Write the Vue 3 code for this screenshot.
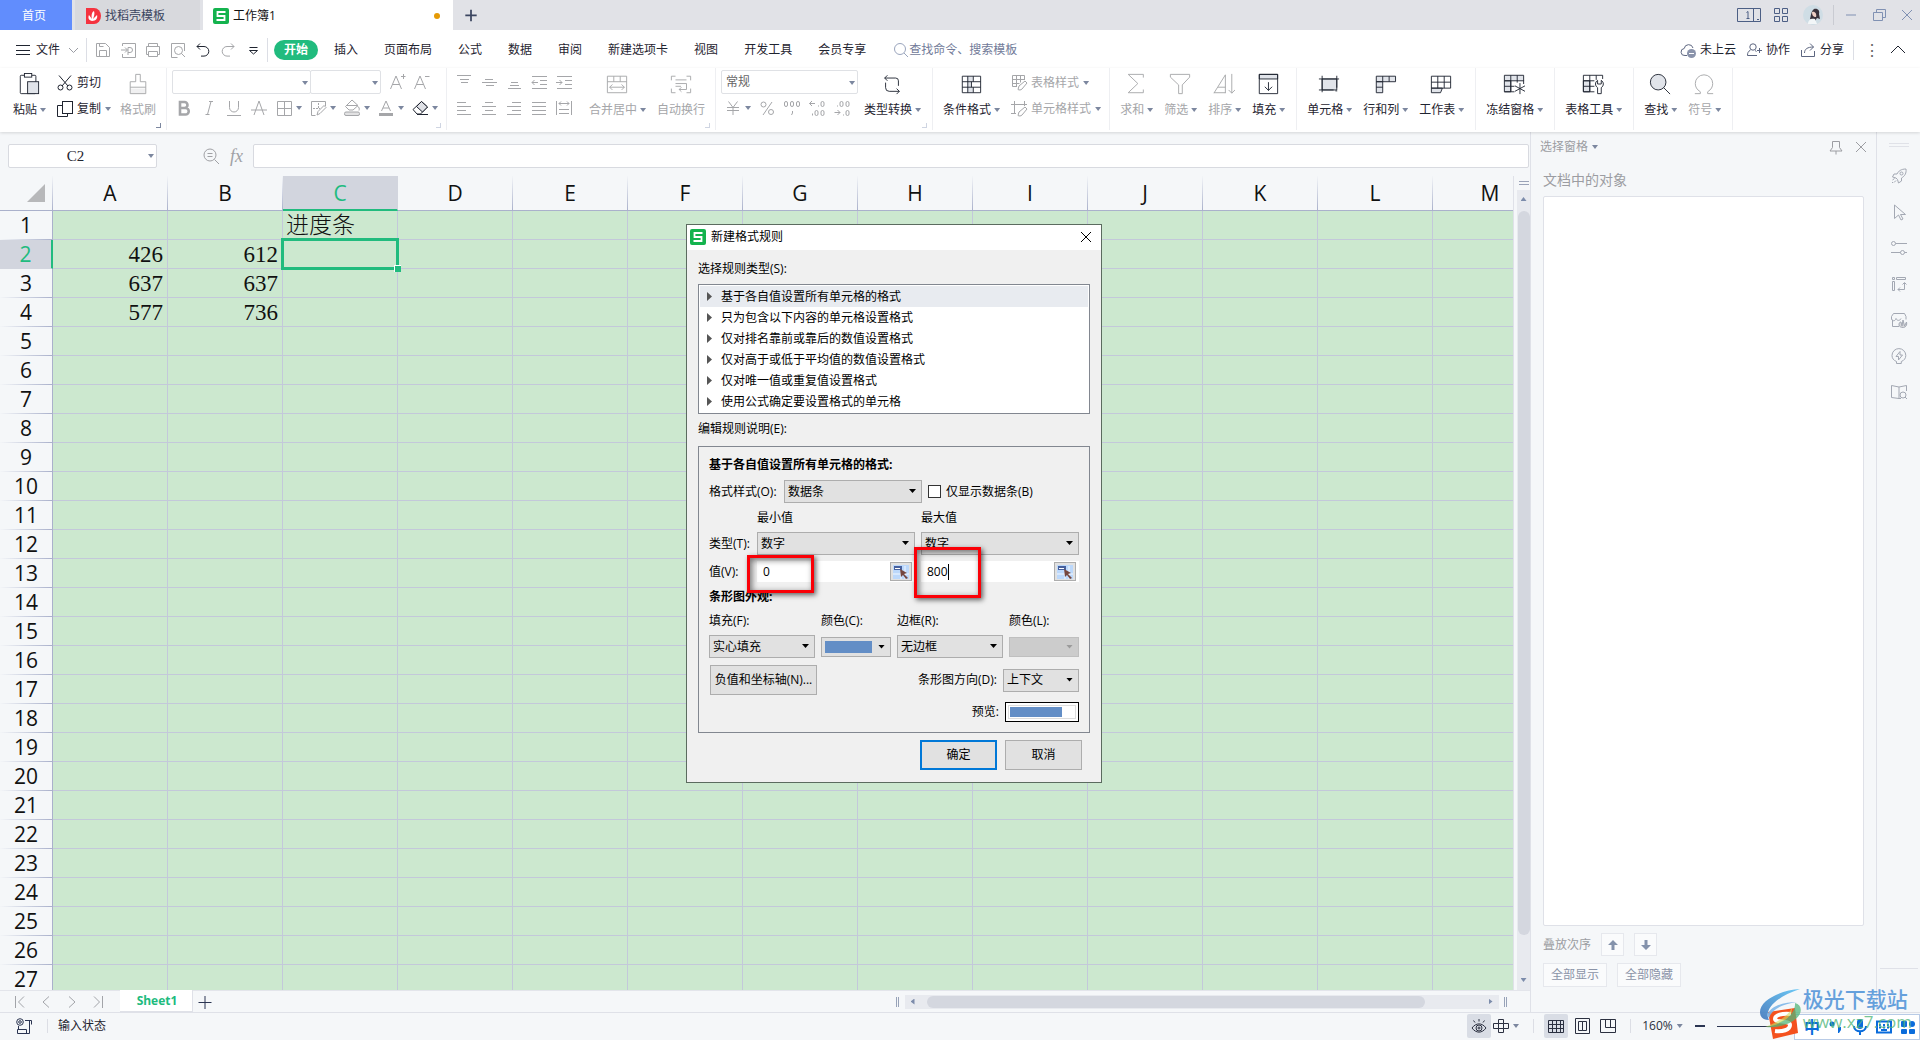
<script setup>
import { ref } from 'vue'

const icons = {
  menu: '<path d="M1 3.500h14M1 8.500h14M1 12.500h14"/>',
  chevDown: '<path d="M4 6l4.500 4.500L13 6"/>',
  save: '<path d="M1.500 1.500h9l4 4v9h-13zM4.500 14.500v-6h7v6M4.500 1.500v3h4"/>',
  exportPdf: '<path d="M2.500 4V1.500h13v14h-13V12M1 8h6M5 5.500L7.500 8 5 10.500M8 13V5.500h2a2 2 0 0 1 0 5H8"/>',
  print: '<path d="M3.500 4.500v-3h9v3M3.500 12.500h-2v-8h13v8h-2M3.500 9.500h9v5h-9z"/>',
  preview: '<path d="M14.500 9V1.500h-13v14h6"/><circle cx="8.500" cy="8.500" r="4"/><path d="M11.500 11.500l3.500 3.500"/>',
  undo: '<path d="M5 1.500L2 4.500l3 3M2 4.500h7a4.800 4.800 0 0 1 0 9.600H6"/>',
  redo: '<path d="M11 1.500l3 3-3 3M14 4.500H7a4.800 4.800 0 0 0 0 9.600h3"/>',
  more: '<path d="M4.500 5.500h8M4.500 8.500l4 3.500 4-3.500z"/>',
  search: '<circle cx="7" cy="7" r="5.500"/><path d="M11 11l4 4"/>',
  cloud: '<path d="M7 13.500H5a3.500 3.500 0 0 1-.8-7 4.500 4.500 0 0 1 8.800-.5"/><circle cx="11.500" cy="11.500" r="4.500" fill="#8a93ab" stroke="none"/><path d="M9 11.500h5" stroke="#fff"/>',
  person: '<circle cx="7" cy="5" r="3.200"/><path d="M4.500 8C2 9.500 1.500 11 1.500 13.500h9.500M9 8.500l1.500 1M11 8.500h5M13.500 6v5"/>',
  share: '<path d="M1.500 8v6.500h13V9M4.500 11c0-4 3-6 9-6M10 1.500L13.500 5 10 8.500"/>',
  chevUp: '<path d="M1 11l7-7 7 7"/>',
  paste: '<rect x="2.500" y="2.500" width="17" height="20" rx="1" fill="#fff"/><rect x="7" y=".5" width="8" height="4" fill="#fff"/><rect x="10.500" y="9.500" width="12" height="13" fill="#e1e4ea"/>',
  cut: '<circle cx="3.500" cy="12.500" r="2.500"/><circle cx="12.500" cy="12.500" r="2.500"/><path d="M2 .5L11 11M14 .5L5 11"/>',
  copy: '<path d="M5 4.500H.5v11h10v-3"/><rect x="5.500" y=".5" width="10" height="12" fill="#fff"/>',
  painter: '<rect x="3.500" y="17" width="17" height="5.500" fill="#f0f0f1" stroke="none"/><path d="M9.500 1.500h5v8h6v13h-17v-13h6zM3.500 15.500h17"/>',
  bold: '<path d="M4 2h4.500a3 3 0 0 1 0 6H4zM4 8h5.500a3.200 3.200 0 0 1 0 6.500H4z" stroke-width="2.600"/>',
  italic: '<path d="M8 1.500h4M10 1.500L6.500 14.500M4.500 14.500h4"/>',
  underline: '<path d="M3.500 1v6.500a4.500 4.500 0 0 0 9 0V1M1 15.500h14"/>',
  strike: '<path d="M3 15L8 1l5 14M0 10h16"/>',
  border: '<path d="M1.500 1.500h14v14h-14zM8.500 1.500v14M1.500 8.500h14"/>',
  borderPen: '<path d="M15.500 6V1.500h-14v14h4"/><path d="M8.500 3v6M3 8.500h7" stroke-dasharray="2 1"/><path d="M7 15l1-3.500 6-6 2 2-6 6z"/>',
  bucket: '<path d="M8 0l6 5.500-5 4.500h-4L1.500 6.500zM3 5.500h10M13 5.500c2.500 2 2.500 3 2 5"/><rect x=".5" y="12" width="15" height="3.500" rx="1.500" fill="#e2e2e3"/>',
  fontColor: '<path d="M3.500 11L8 1l4.500 10M5 8h6"/><path d="M1 14.500h14" stroke-width="3"/>',
  eraser: '<path d="M9.500 1.500l6 5.500-7 7H5L1 9.500z"/><path d="M9.500 1.500l6 5.500-5 5L4.500 6.500z" fill="#dfe1e6"/><path d="M5 14.500h11"/>',
  aPlus: '<path d="M1.500 15L7 2l5.500 13M3.500 10.500h7M12 2.500h4.500M14.500 0v5"/>',
  aMinus: '<path d="M1.500 15L7 2l5.500 13M3.500 10.500h7M12 2.500h4.500"/>',
  alTop: '<path d="M1 1.500h14M4 5.500h9M5 8.500h7"/>',
  alMid: '<path d="M4 5.500h8M1 8.500h15M5 11.500h8"/>',
  alBot: '<path d="M5 8.500h7M4 11.500h9M2 14.500h13"/>',
  outdent: '<path d="M1 2.500h15M9 6.500h7M9 10.500h7M1 14.500h15M1 8.500h6M3.500 6L1 8.500 3.500 11"/>',
  indent: '<path d="M1 2.500h15M9 6.500h7M9 10.500h7M1 14.500h15M0 8.500h6M3.500 6L6 8.500 3.500 11"/>',
  alLeft: '<path d="M1 2.500h9M1 6.500h14M1 10.500h9M1 14.500h14"/>',
  alCenter: '<path d="M4 2.500h8M1 6.500h14M4 10.500h8M1 14.500h14"/>',
  alRight: '<path d="M6 2.500h9M1 6.500h14M6 10.500h9M1 14.500h14"/>',
  justify: '<path d="M1 2.500h14M1 6.500h14M1 10.500h14M1 14.500h14"/>',
  distribute: '<path d="M.5 1v14M15.500 1v14M3 3.500h10M5 1.500L3 3.500l2 2M11 1.500l2 2-2 2M3 9.500h10M3 13.500h10"/>',
  merge: '<path d="M1.500 3.500h21v18h-21zM1.500 9.500h21M8.500 3.500v6M15.500 3.500v6M4 15.500h16M7 12.500l-3 3 3 3M17 12.500l3 3-3 3"/>',
  wrap: '<path d="M1.500 8V3.500H6M18 3.500h4.500V8M1.500 17v4.500H6M18 21.500h4.500V17M6 7.500h12M6 11.500h12v6.500h-8M12.500 15.500L10 18l2.500 2.500M6 14.500h6"/>',
  yen: '<path d="M3.500 1.500L8 7.500l4.500-6M2 7.500h12M2 10.500h12M8 7.500V15"/>',
  percent: '<circle cx="4.500" cy="4.500" r="2.500"/><circle cx="12" cy="12" r="2.500"/><path d="M13 2L4 15"/>',
  thousand: '<rect x=".5" y="1.500" width="3" height="5" rx="1.500"/><rect x="6.500" y="1.500" width="3" height="5" rx="1.500"/><rect x="12.500" y="1.500" width="3" height="5" rx="1.500"/><path d="M8.500 11v2l-1 2"/>',
  decInc: '<path d="M.5 3.500H6M3 1L.5 3.500 3 6M3.500 13.500v2M9.500 5.500v1"/><rect x="12" y="1.500" width="3" height="5" rx="1.500"/><rect x="6" y="10.500" width="3" height="5" rx="1.500"/><rect x="12" y="10.500" width="3" height="5" rx="1.500"/>',
  decDec: '<rect x="6" y="1.500" width="3" height="5" rx="1.500"/><rect x="12" y="1.500" width="3" height="5" rx="1.500"/><path d="M3.500 5.500v1M.5 12.500H6M3.500 10L6 12.500 3.500 15M9.500 14.500v1"/><rect x="12" y="10.500" width="3" height="5" rx="1.500"/>',
  convert: '<path d="M7 2.500L4 5.500l3 3M4 5.500h12a3 3 0 0 1 3 3V14M5 10.500V16a4 4 0 0 0 4 4h11M17 17l3 3-3 3"/>',
  condFmt: '<path d="M7.500 3.500h7v6h-7zM8.500 9.500h4v6h-4zM7.500 15.500h7v6h-7z" fill="#e1e4ea" stroke="none"/><path d="M2.500 3.500h20v18h-20zM2.500 9.500h20M2.500 15.500h20M8.500 3.500v18M14.500 3.500v6M12.500 9.500v6M14.500 15.500v6"/>',
  tblStyle: '<path d="M6 11.500H1.500v-11h12V5M1.500 4.500h12M1.500 8.500h7M5.500.5v11M9.500.5v7"/><path d="M7 14.500l1-3.500 6-5 2 2-5 6c-1 1.200-3 1.200-4 .5z"/>',
  cellStyle: '<path d="M3.500 0v13M0 3.500h16M13.500 0v5M0 12.500h5"/><path d="M7 14.500l1-3.500 6-5 2 2-5 6c-1 1.200-3 1.200-4 .5z"/>',
  sum: '<path d="M20 5V1.500H3.500L14 11.500 3.500 21.500H20V18"/>',
  filter: '<path d="M1.500 1.500h21v3L14.500 13v9.500h-4V13l-9-8.500z"/>',
  sort: '<path d="M1 22L13.500 2v20M5.500 15.500h8M1 21.500h12.500M20.500 1v21M17 18.500l3.500 3.500 3.500-3.500"/>',
  fill: '<path d="M2.500 1.500h20v5h-20z" fill="#e1e4ea"/><path d="M2.500 1.500h20v21h-20zM12.500 10v9M8.500 15l4 4 4-4"/>',
  cells: '<path d="M4.500 6.500h16v12h-16z" fill="#e1e4ea"/><path d="M4.500 3v18M20.500 3v13M1 6.500h22M1 18.500h16M19 19.500h2"/>',
  rowCol: '<path d="M2.500 3.500h21v6h-21zM2.500 9.500h7v12h-7z" fill="#e1e4ea"/><path d="M9.500 3.500v6M16.500 3.500v6M2.500 15.500h7"/>',
  sheet: '<path d="M1.500 16.500v5h10l2-5z" fill="#e1e4ea"/><path d="M1.500 3.500h21v13h-21zM1.500 10h21M8.500 3.500v13M15.500 3.500v13"/>',
  freeze: '<path d="M1.500 2.500h21v6h-21zM1.500 8.500h7v12h-7z" fill="#e1e4ea"/><path d="M8.500 2.500v18M15.500 2.500v8M1.500 14.500h11M22.500 8v4M1.500 20.500h11"/><path d="M18.500 11v12M13 14l11 6M24 14l-11 6"/>',
  tools: '<path d="M1.500 8.500h7v12h-7z" fill="#e1e4ea"/><path d="M1.500 2.500h21v4M1.500 2.500v18h12M8.500 2.500v18M15.500 2.500v5M1.500 8.500h12M1.500 14.500h12"/><path d="M17 8v4h4V8c3 2 3 6 0 8v6.500h-4V16c-3-2-3-6 0-8z" fill="#fff"/>',
  find: '<circle cx="10" cy="10" r="8.500" fill="#e1e4ea"/><path d="M16 16l7 7"/>',
  omega: '<path d="M2 22.500h6v-2C4 18 2.500 15 2.500 11.500a9.500 9.500 0 0 1 19 0C21.500 15 20 18 16 20.500v2h6"/>',
  zoomOut: '<circle cx="7" cy="7" r="6"/><path d="M4.500 5.500h5M4.500 8.500h5M11.500 11.500L16 16"/>',
  pin: '<path d="M4.500 2.500h7v6l2.500 3.500H2l2.500-3.500zM8 12v3.500"/>',
  close: '<path d="M3 3l10 10M13 3L3 13"/>',
  plus: '<path d="M8 2v13M1.500 8.500h13"/>',
  minus: '<path d="M3 8h10"/>',
  restore: '<path d="M5.500 5V2.500h9v8H12M2.500 5.500h9v8h-9z"/>',
  apps: '<path d="M1.500 1.500h5v5h-5zM9.500 1.500h5v5h-5zM1.500 9.500h5v5h-5zM9.500 9.500h5v5h-5z"/>',
  rocket: '<path d="M15 1c-5 0-7.500 2-9 5H3L1.500 9 5 10l1.500 1.500 1 3.500 3-2v-3C14 8 15.500 5 15 1zM1.500 12l2-1.500M3 14.500l2-2M1 15l1-1"/><circle cx="10.500" cy="5.500" r="1.500"/>',
  cursor: '<path d="M3.500 1v13.500l4-3.500 2.500 5 2-1-2.500-4.500h5z"/>',
  sliders: '<circle cx="2.500" cy="3.500" r="2"/><circle cx="11.500" cy="12.500" r="2"/><path d="M4.500 3.500H16M0 12.500h9.500M13.500 12.500H16"/>',
  transpose: '<path d="M1.500 1.500h2v2h-2zM5.500 1.500h9v2h-9zM1.500 5.500h2v9h-2zM7 13.500h6.500V7M9 11.500l-2 2 2 2M11.500 8.500l2-2 2 2"/>',
  shop: '<path d="M8 14.500H1.500V8M.5 7.500v-3l2-3h11l1.500 3v3M.5 6.500c1 3 3.500 3 4.500 0 1 2.500 4 2.500 5 0"/><path d="M8 13c0-2 .5-3 2-3l1 4 1-6 1.500 6 2-4c.8 3-.5 5-3 5.500-2.500 0-4.500-1-4.500-2.500z" fill="#d8d9dc"/>',
  bulb: '<path d="M5.500 15.500v-2C2.500 12.500 1 10 1 7.500a6.800 6.800 0 0 1 13.800 0c0 2.500-1.500 5-4.500 6v2zM9 3.500L5 8.500h2.500V12l4-5H9z"/>',
  book: '<path d="M8 14.500L.5 13.500v-12L8 3l7.500-1.500V7M8 3v11.500h2"/><circle cx="12" cy="11" r="3"/><path d="M14 13l2 2"/>',
  first: '<path d="M3.500 2v12M12 2.500L6.500 8l5.500 5.500"/>',
  prev: '<path d="M11 2.500L5 8l6 5.500"/>',
  next: '<path d="M5 2.500L11 8l-6 5.500"/>',
  last: '<path d="M4 2.500L9.500 8 4 13.500M12.500 2v12"/>',
  macro: '<circle cx="4" cy="4" r="3.300"/><circle cx="4" cy="4" r="1.300"/><path d="M9 2.500h6.500v4M13.500 2.500v13h-12v-4h9v4M2.500 11.500V8"/>',
  eye: '<path d="M1 10c4-5.500 10-5.500 14 0-4 5.500-10 5.500-14 0z"/><circle cx="8" cy="10" r="3"/><circle cx="8" cy="10" r="1"/><path d="M8 1v2.500M2.500 2.500L4 4.500M13.500 2.500L12 4.500"/>',
  cross: '<path d="M5.500 1.500h5v4h5v5h-5v4h-5v-4h-5v-5h5zM5.500 5.500h5v5h-5z"/>',
  gridView: '<path d="M.5 2.500h15v12H.5zM.5 6.500h15M.5 10.500h15M4.500 2.500v12M8.500 2.500v12M12.500 2.500v12"/>',
  pageView: '<path d="M1.500.5h14v15h-14zM4.500 3.500h4v9h-4zM8.500 3.500h4v9h-4z"/>',
  breakView: '<path d="M.5 1.500h15v13H.5zM5.500 1.500v8h10M10.500 1.500v8"/>'
}

const menus = ['插入', '页面布局', '公式', '数据', '审阅', '新建选项卡', '视图', '开发工具', '会员专享']
const quick = [
  ['save', 1, '保存'], ['exportPdf', 1, '输出'], ['print', 1, '打印'], ['preview', 1, '预览'],
  ['undo', 0, '撤销'], ['redo', 1, '恢复'], ['more', 0, '更多']
]
const fontTools = [
  ['bold', 0], ['italic', 0], ['underline', 0], ['strike', 0],
  ['border', 1], ['borderPen', 1], ['bucket', 1], ['fontColor', 1]
]
const alignTop = ['alTop', 'alMid', 'alBot', 'outdent', 'indent']
const alignBottom = ['alLeft', 'alCenter', 'alRight', 'justify', 'distribute']
const editGroups = [
  [['sum', '求和', 1], ['filter', '筛选', 1], ['sort', '排序', 1], ['fill', '填充', 0]],
  [['cells', '单元格', 0], ['rowCol', '行和列', 0], ['sheet', '工作表', 0]],
  [['freeze', '冻结窗格', 0]],
  [['tools', '表格工具', 0]],
  [['find', '查找', 0], ['omega', '符号', 1]]
]
const columns = 'ABCDEFGHIJKLM'.split('')
const cells = { A2: '426', B2: '612', A3: '637', B3: '637', A4: '577', B4: '736', C1: '进度条' }
const rules = [
  '基于各自值设置所有单元格的格式', '只为包含以下内容的单元格设置格式', '仅对排名靠前或靠后的数值设置格式',
  '仅对高于或低于平均值的数值设置格式', '仅对唯一值或重复值设置格式', '使用公式确定要设置格式的单元格'
]
const sideIcons = ['rocket', 'cursor', 'sliders', 'transpose', 'shop', 'bulb', 'book']
const minValue = ref('0')
const maxValue = ref('800')
const formula = ref('')
</script>

<template>
  <div class="app">
    <header class="titlebar">
      <button class="tab home">首页</button>
      <button class="tab template">
        <svg class="logo" viewBox="0 0 16 16"><path d="M1 0h8a7 8 0 0 1 0 16H1z" fill="#f5333f" /><path d="M7 13C3 12 3 9 4 7l3 4c-1-4 0-7 2-8 1 3 0 5-1 8l4-4c1 3-1 6-5 6z" fill="#fff" /></svg>
        找稻壳模板
      </button>
      <button class="tab book">
        <svg class="logo" viewBox="0 0 16 16"><rect width="16" height="16" rx="2" fill="#14b34e" /><path d="M12.500 4h-8v4h7v4h-8" fill="none" stroke="#fff" stroke-width="1.800" /></svg>
        工作簿1<i class="dot"></i>
      </button>
      <button class="newtab" aria-label="新建"><svg class="i16" viewBox="0 0 16 16" v-html="icons.plus"></svg></button>
      <div class="window-tools">
        <svg class="count" viewBox="0 0 24 14"><path d="M.5.500h23v13H.5zM16.500.500v13M20 11.500h2" /><path d="M9.500 4.500L11 3.500v7M9.500 10.500h3" /></svg>
        <svg class="i16" viewBox="0 0 16 16" v-html="icons.apps"></svg>
        <svg class="avatar" viewBox="0 0 20 20"><circle cx="10" cy="10" r="10" fill="#cfdde5" /><path d="M7 14c1-3 1-8 4-10 4-1 6 2 5 5l1 5-3-1-2 3z" fill="#3a323b" /><path d="M9 7c3-1 5 2 4 5-3 0-4-2-4-5z" fill="#f0cfc4" /><path d="M5 19c0-4 3-6 7-5l2 5z" fill="#f2f6f8" /></svg>
        <i class="bar"></i>
        <button aria-label="最小化"><svg class="i16" viewBox="0 0 16 16" v-html="icons.minus"></svg></button>
        <button aria-label="还原"><svg class="i16" viewBox="0 0 16 16" v-html="icons.restore"></svg></button>
        <button aria-label="关闭"><svg class="i16" viewBox="0 0 16 16" v-html="icons.close"></svg></button>
      </div>
    </header>

    <nav class="menubar">
      <button class="file"><svg class="i16" viewBox="0 0 16 16" v-html="icons.menu"></svg><span>文件</span><svg class="i16 pale" viewBox="0 0 16 16" v-html="icons.chevDown"></svg></button>
      <i class="bar"></i>
      <div class="quick">
        <button v-for="[name, off, label] in quick" :key="name" :class="{ off }" :aria-label="label"><svg class="i16" viewBox="0 0 16 16" v-html="icons[name]"></svg></button>
      </div>
      <i class="bar"></i>
      <div class="menus">
        <button class="active">开始</button>
        <button v-for="m in menus" :key="m">{{ m }}</button>
      </div>
      <button class="search"><svg class="i16" viewBox="0 0 16 16" v-html="icons.search"></svg>查找命令、搜索模板</button>
      <div class="account">
        <button><svg class="i16" viewBox="0 0 16 16" v-html="icons.cloud"></svg>未上云</button>
        <button><svg class="i16" viewBox="0 0 16 16" v-html="icons.person"></svg>协作</button>
        <button><svg class="i16" viewBox="0 0 16 16" v-html="icons.share"></svg>分享</button>
        <i class="bar"></i>
        <span class="kebab">⋮</span>
        <svg class="i16" viewBox="0 0 16 16" v-html="icons.chevUp"></svg>
      </div>
    </nav>

    <div class="ribbon">
      <section class="group first">
        <button class="big"><svg class="i24" viewBox="0 0 24 24" v-html="icons.paste"></svg><span>粘贴<i class="caret"></i></span></button>
        <div class="stack">
          <button class="row small"><svg class="i16" viewBox="0 0 16 16" v-html="icons.cut"></svg>剪切</button>
          <button class="row small"><svg class="i16" viewBox="0 0 16 16" v-html="icons.copy"></svg>复制<i class="caret"></i></button>
        </div>
        <button class="big off"><svg class="i24" viewBox="0 0 24 24" v-html="icons.painter"></svg><span>格式刷</span></button>
        <i class="corner dark"></i>
      </section>
      <section class="group fonts">
        <div class="stack">
          <div class="row pair off">
            <span class="combo wide"><select aria-label="字体"><option></option></select></span><span class="combo"><select aria-label="字号"><option></option></select></span>
            <button class="tool" aria-label="增大字号"><svg class="i16" viewBox="0 0 16 16" v-html="icons.aPlus"></svg></button>
            <button class="tool" aria-label="减小字号"><svg class="i16" viewBox="0 0 16 16" v-html="icons.aMinus"></svg></button>
          </div>
          <div class="row tools">
            <button v-for="[name, drop] in fontTools" :key="name" class="tool off" :aria-label="name"><svg class="i16" viewBox="0 0 16 16" v-html="icons[name]"></svg><i v-if="drop" class="caret"></i></button>
            <button class="tool" aria-label="清除"><svg class="i16" viewBox="0 0 16 16" v-html="icons.eraser"></svg><i class="caret"></i></button>
          </div>
        </div>
        <i class="corner"></i>
      </section>
      <section class="group align off">
        <div class="stack">
          <div class="row tools"><button v-for="n in alignTop" :key="n" class="tool" :aria-label="n"><svg class="i16" viewBox="0 0 16 16" v-html="icons[n]"></svg></button></div>
          <div class="row tools"><button v-for="n in alignBottom" :key="n" class="tool" :aria-label="n"><svg class="i16" viewBox="0 0 16 16" v-html="icons[n]"></svg></button></div>
        </div>
        <button class="big merge"><svg class="i24" viewBox="0 0 24 24" v-html="icons.merge"></svg><span>合并居中<i class="caret"></i></span></button>
        <button class="big"><svg class="i24" viewBox="0 0 24 24" v-html="icons.wrap"></svg><span>自动换行</span></button>
        <i class="corner"></i>
      </section>
      <section class="group number">
        <div class="stack off">
          <div class="row"><span class="combo format"><select aria-label="数字格式"><option>常规</option></select></span></div>
          <div class="row tools">
            <button class="tool" aria-label="货币"><svg class="i16" viewBox="0 0 16 16" v-html="icons.yen"></svg><i class="caret"></i></button>
            <button v-for="n in ['percent', 'thousand', 'decInc', 'decDec']" :key="n" class="tool" :aria-label="n"><svg class="i16" viewBox="0 0 16 16" v-html="icons[n]"></svg></button>
          </div>
        </div>
        <button class="big"><svg class="i24" viewBox="0 0 24 24" v-html="icons.convert"></svg><span>类型转换<i class="caret"></i></span></button>
        <i class="corner"></i>
      </section>
      <section class="group styles">
        <button class="big"><svg class="i24" viewBox="0 0 24 24" v-html="icons.condFmt"></svg><span>条件格式<i class="caret"></i></span></button>
        <div class="stack off">
          <button class="row small"><svg class="i16" viewBox="0 0 16 16" v-html="icons.tblStyle"></svg>表格样式<i class="caret"></i></button>
          <button class="row small"><svg class="i16" viewBox="0 0 16 16" v-html="icons.cellStyle"></svg>单元格样式<i class="caret"></i></button>
        </div>
      </section>
      <section v-for="(g, i) in editGroups" :key="i" class="group">
        <button v-for="[name, label, off] in g" :key="name" class="big" :class="{ off }"><svg class="i24" viewBox="0 0 24 24" v-html="icons[name]"></svg><span>{{ label }}<i class="caret"></i></span></button>
      </section>
    </div>

    <div class="main">
      <div class="editor">
        <div class="formula-bar">
          <label class="namebox"><input aria-label="名称框" value="C2" /><i class="caret"></i></label>
          <div class="fx"><svg class="i16" viewBox="0 0 16 16" v-html="icons.zoomOut"></svg><em>fx</em></div>
          <input v-model="formula" class="formula" aria-label="编辑栏" />
        </div>
        <div class="sheet">
          <div class="viewport">
            <table>
              <colgroup><col class="rowcol" /><col v-for="c in columns" :key="c" class="datacol" /></colgroup>
              <thead>
                <tr><th class="cornercell"><i></i></th><th v-for="c in columns" :key="c" :class="{ sel: c === 'C' }">{{ c }}</th></tr>
              </thead>
              <tbody>
                <tr v-for="r in 27" :key="r">
                  <th :class="{ sel: r === 2 }">{{ r }}</th>
                  <td v-for="c in columns" :key="c" :class="{ text: c === 'C' }">{{ cells[c + r] }}<i v-if="c + r === 'C2'" class="selection"></i></td>
                </tr>
              </tbody>
            </table>
          </div>
          <div class="vscroll">
            <i class="split"></i>
            <div class="vtrack"><i class="up"></i><i class="vthumb"></i><i class="down"></i></div>
          </div>
        </div>
        <div class="sheetbar">
          <div class="sheetnav">
            <button v-for="n in ['first', 'prev', 'next', 'last']" :key="n" :aria-label="n"><svg class="i16" viewBox="0 0 16 16" v-html="icons[n]"></svg></button>
          </div>
          <button class="sheettab">Sheet1</button>
          <button class="addsheet" aria-label="新建工作表"><svg class="i16" viewBox="0 0 16 16" v-html="icons.plus"></svg></button>
          <div class="hscroll"><i class="grip"></i><div class="htrack"><i class="left"></i><i class="hthumb"></i><i class="right"></i></div><i class="grip"></i></div>
        </div>
      </div>

      <aside class="pane">
        <div class="panehead">选择窗格<i class="caret"></i><span class="push"></span>
          <button aria-label="固定"><svg class="i16" viewBox="0 0 16 16" v-html="icons.pin"></svg></button>
          <button aria-label="关闭窗格"><svg class="i16" viewBox="0 0 16 16" v-html="icons.close"></svg></button>
        </div>
        <h2>文档中的对象</h2>
        <div class="objects"></div>
        <div class="order"><span>叠放次序</span><button aria-label="上移"><svg class="i12" viewBox="0 0 12 12"><path d="M6 1l5 5H7.500v5h-3V6H1z" /></svg></button><button aria-label="下移"><svg class="i12" viewBox="0 0 12 12"><path d="M6 11l5-5H7.500V1h-3v5H1z" /></svg></button></div>
        <div class="shows"><button>全部显示</button><button>全部隐藏</button></div>
      </aside>
      <aside class="strip">
        <i class="handle"></i>
        <button v-for="n in sideIcons" :key="n" :aria-label="n"><svg class="i16" viewBox="0 0 16 16" v-html="icons[n]"></svg></button>
        <i class="rule"></i>
      </aside>
    </div>

    <footer class="status">
      <svg class="i16 macro" viewBox="0 0 16 16" v-html="icons.macro"></svg>
      <i class="bar"></i>
      <span>输入状态</span>
      <div class="views">
        <button class="on" aria-label="护眼"><svg class="i16" viewBox="0 0 16 16" v-html="icons.eye"></svg></button>
        <button class="crossbtn" aria-label="阅读"><svg class="i16" viewBox="0 0 16 16" v-html="icons.cross"></svg><i class="caret"></i></button>
        <i class="bar"></i>
        <button class="on" aria-label="普通视图"><svg class="i16" viewBox="0 0 16 16" v-html="icons.gridView"></svg></button>
        <button aria-label="页面布局"><svg class="i16" viewBox="0 0 16 16" v-html="icons.pageView"></svg></button>
        <button class="break" aria-label="分页预览"><svg class="i16" viewBox="0 0 16 16" v-html="icons.breakView"></svg></button>
        <i class="bar"></i>
        <button class="zoom">160%<i class="caret"></i></button>
        <i class="zoomout"></i>
        <i class="zoomline"></i>
      </div>
    </footer>

    <div class="dialog" role="dialog" aria-label="新建格式规则">
      <div class="dtitle">
        <svg class="logo" viewBox="0 0 16 16"><rect width="16" height="16" rx="2" fill="#14b34e" /><path d="M12.500 4h-8v4h7v4h-8" fill="none" stroke="#fff" stroke-width="1.800" /></svg>
        <span>新建格式规则</span>
        <button aria-label="关闭对话框"><svg class="i16" viewBox="0 0 16 16" v-html="icons.close"></svg></button>
      </div>
      <div class="dbody">
        <p class="line">选择规则类型(S):</p>
        <ul class="rules"><li v-for="(r, i) in rules" :key="r" :class="{ on: i === 0 }">{{ r }}</li></ul>
        <p class="line">编辑规则说明(E):</p>
        <div class="panel">
          <b class="line">基于各自值设置所有单元格的格式:</b>
          <div class="frow">
            <label class="stylelabel" for="style">格式样式(O):</label>
            <span class="pick style"><select id="style"><option>数据条</option></select></span>
            <label class="check"><input type="checkbox" />仅显示数据条(B)</label>
          </div>
          <div class="minmax labels"><span></span><label for="mintype">最小值</label><label for="maxtype">最大值</label></div>
          <div class="minmax">
            <span>类型(T):</span>
            <span class="pick"><select id="mintype"><option>数字</option></select></span>
            <span class="pick"><select id="maxtype"><option>数字</option></select></span>
          </div>
          <div class="minmax">
            <label for="minval">值(V):</label>
            <div class="value">
              <input id="minval" v-model="minValue" />
              <button aria-label="选取最小值"><svg class="i16" viewBox="0 0 16 14"><path d="M0 0h16v14H0z" fill="#bcd8fb" /><path d="M8 1v13M0 9h16M12 1v13" stroke="#f2f8ff" /><path d="M1 1h8v4H1z" fill="#46609e" /><path d="M2 3h5v1H2z" fill="#fff" /><path d="M7 4l7 4-3 1 4 4-2 1-3-4-2 2z" fill="#75463e" /></svg></button>
              <i class="mark low"></i>
            </div>
            <div class="value">
              <input id="maxval" v-model="maxValue" class="maxinput" aria-label="最大值数值" /><i class="textcaret"></i>
              <button aria-label="选取最大值"><svg class="i16" viewBox="0 0 16 14"><path d="M0 0h16v14H0z" fill="#bcd8fb" /><path d="M8 1v13M0 9h16M12 1v13" stroke="#f2f8ff" /><path d="M1 1h8v4H1z" fill="#46609e" /><path d="M2 3h5v1H2z" fill="#fff" /><path d="M7 4l7 4-3 1 4 4-2 1-3-4-2 2z" fill="#75463e" /></svg></button>
              <i class="mark high"></i>
            </div>
          </div>
          <b class="line">条形图外观:</b>
          <div class="looks labels"><label for="fillkind">填充(F):</label><label for="fillcolor">颜色(C):</label><label for="edge">边框(R):</label><label for="edgecolor">颜色(L):</label></div>
          <div class="looks">
            <span class="pick"><select id="fillkind"><option>实心填充</option></select></span>
            <button id="fillcolor" class="swatch"><i></i></button>
            <span class="pick"><select id="edge"><option>无边框</option></select></span>
            <button id="edgecolor" class="swatch" disabled></button>
          </div>
          <div class="frow axis">
            <button class="axisbtn">负值和坐标轴(N)...</button>
            <label for="dir">条形图方向(D):</label>
            <span class="pick dir"><select id="dir"><option>上下文</option></select></span>
          </div>
          <div class="frow prev"><span>预览:</span><div class="sample"><div><i></i></div></div></div>
        </div>
        <div class="actions"><button class="ok">确定</button><button>取消</button></div>
      </div>
    </div>

    <div class="ime">
      <svg class="sogou" viewBox="0 0 32 32"><path d="M1 5L28 1l3 25-25 6z" fill="#f4511e" /><path d="M24 7C15 6 8 8 8 12s15 1 15 6-8 7-15 6" fill="none" stroke="#fff" stroke-width="4" /></svg>
      <b>中</b>
      <svg class="i16" viewBox="0 0 16 16"><circle cx="4" cy="5" r="2.500" /><path d="M10 8h3v3l-2 3h-1z" /></svg>
      <svg class="i16" viewBox="0 0 16 16"><rect x="5" y="0" width="6" height="10" rx="3" /><path d="M2 7c0 7 12 7 12 0M8 12v4" class="ln" /></svg>
      <svg class="i16" viewBox="0 0 16 16"><path d="M1 2.500h14v11H1zM3 6h2M7 6h2M11 6h2M3 8.500h2M7 8.500h2M11 8.500h2M5 11h6" class="ln" /></svg>
      <svg class="i16" viewBox="0 0 16 16"><rect x="1" y="2" width="6" height="6" rx="1" /><rect x="9" y="2" width="6" height="6" rx="3" /><rect x="1" y="10" width="6" height="5" rx="1" /><rect x="9" y="10" width="6" height="5" rx="1" /></svg>
    </div>
    <div class="watermark">
      <svg viewBox="0 0 44 42">
        <defs><linearGradient id="sw" x1="0" y1="1" x2="1" y2="0"><stop offset="0" stop-color="#3f76bb" /><stop offset="1" stop-color="#5cc3f5" /></linearGradient></defs>
        <path d="M41 1C22 2 1 12 1 24c0 5 3 8 9 8-5-9 4-22 31-31z" fill="url(#sw)" opacity=".9" />
        <path d="M8 27c4-10 18-13 30-13-14 2-25 7-28 16z" fill="#7db6e8" opacity=".9" />
        <path d="M36 15c8 2 8 12-2 18-8 5-18 7-27 6 12-3 30-10 29-24z" fill="#52b67a" opacity=".75" />
        <path d="M33 20c1 9-11 17-27 19 11-4 22-10 27-19z" fill="#cddc5c" opacity=".6" />
      </svg>
      <div><b>极光下载站</b><span>www.xz7.com</span></div>
    </div>
  </div>
</template>

<style>
body { margin: 0; overflow: hidden; }
</style>

<style scoped>
* { box-sizing: border-box; }
.app { position: relative; display: flex; flex-direction: column; height: 100vh; overflow: hidden; background: #f5f7f9; color: #1f2430; font: 12px/18px "Open Sans", "Noto Sans CJK SC", sans-serif; }
button, input, select { font: inherit; color: inherit; border: 0; background: none; padding: 0; margin: 0; white-space: nowrap; }
i { display: block; flex: none; }
svg { display: block; flex: none; fill: none; stroke: currentColor; overflow: visible; }
.logo { stroke: none; }
.i16, .logo { width: 16px; height: 16px; }
.i24 { width: 24px; height: 24px; }
.off { color: #a5a6a9; }
.caret { width: 6px; height: 4px; margin-right: -1px; background: #7c879f; clip-path: polygon(0 0, 100% 0, 50% 100%); }
.bar { width: 1px; height: 24px; background: #dcdee5; }

.titlebar { display: flex; flex: none; height: 30px; background: #e1e2e7; color: #3b4560; }
.tab { display: flex; align-items: center; padding-top: 1px; }
.home { width: 72px; justify-content: center; background: #618dfd; color: #fff; padding-right: 4px; }
.template { width: 125px; margin: 0 3px; padding-left: 10px; gap: 4px; background: #d8d9dd; }
.book { width: 250px; padding-right: 13px; padding-left: 10px; gap: 4px; background: #fff; color: #111; }
.dot { width: 6px; height: 6px; margin-left: auto; border-radius: 50%; background: #e59a05; }
.newtab { width: 36px; display: grid; place-items: center; }
.newtab svg { stroke-width: 2; width: 14px; }
.window-tools { display: flex; align-items: center; margin-left: auto; padding-right: 5px; color: #4c5f85; }
.count { width: 24px; height: 14px; margin-right: 12px; }
.avatar { width: 20px; height: 20px; margin: 0 10px 0 14px; stroke: none; }
.window-tools .bar { height: 20px; background: #c9cbd2; margin-right: 9px; }
.window-tools button { color: #8091b3; margin-right: 12px; }
.window-tools button:last-child { margin-right: 0; }

.menubar { display: flex; flex: none; align-items: center; height: 38px; padding-top: 2px; background: #fff; }
.file { display: flex; align-items: center; gap: 5px; width: 86px; padding-left: 15px; }
.pale { color: #9a9ca3; }
.quick { display: flex; width: 180px; padding-left: 8px; gap: 9px; }
.menus { display: flex; padding-left: 6px; }
.menus button { padding: 0 13px; height: 20px; line-height: 20px; }
.menus .active { background: #21bb7e; color: #fff; font-weight: bold; border-radius: 10px; padding: 0 10px; margin-right: 3px; }
.search { display: flex; align-items: center; margin-left: 14px; color: #717a98; }
.search svg { stroke: #9aa5bd; }
.account { display: flex; align-items: center; margin-left: auto; padding-right: 14px; }
.account button { display: flex; align-items: center; gap: 4px; margin-right: 10px; }
.account button svg { color: #5d6680; }
.account .bar { height: 20px; margin-left: -1px; }
.kebab { width: 36px; text-align: center; font-size: 16px; color: #666; }

.ribbon { display: flex; flex: none; height: 64px; background: #fff; position: relative; box-shadow: 0 1px 3px #0002; z-index: 1; }
.group { position: relative; display: flex; gap: 12px; padding: 0 12px 0 10px; height: 62px; border-right: 1px solid #eeeff2; }
.first { padding: 0 10px 0 13px; gap: 10px; }
.first .stack { margin-left: 2px; }
.fonts { padding: 0 9px 0 5px; }
.fonts .tools, .number .tools { padding-left: 4px; }
.align { padding: 0 10px 0 9px; }
.merge { margin-left: 5px; }
.number { padding: 0 12px 0 5px; gap: 6px; }
.styles { padding-right: 9px; }
.big { display: flex; flex-direction: column; align-items: center; gap: 5px; padding-top: 4px; height: 53px; }
.big .i24 { padding: 1px; }
.big span { display: flex; align-items: center; gap: 3px; }
.stack { display: flex; flex-direction: column; align-items: flex-start; gap: 2px; padding-top: 2px; }
.row { display: flex; align-items: center; height: 24px; }
.small { gap: 4px; padding-top: 2px; }
.tools { gap: 9px; }
.tool { display: flex; align-items: center; gap: 4px; }
.pair .tool { margin-left: 8px; }
.combo { position: relative; width: 71px; height: 24px; margin-left: -1px; }
.combo.wide { width: 139px; margin: 0; }
.combo.format { width: 137px; margin: 0; color: #666; }
.combo select { appearance: none; width: 100%; height: 24px; border: 1px solid #dfe1e5; border-radius: 2px; padding-left: 4px; }
.combo::after, .pick::after { content: ""; position: absolute; right: 3px; top: 11px; width: 6px; height: 4px; background: #7c879f; clip-path: polygon(0 0, 100% 0, 50% 100%); pointer-events: none; }
.corner { position: absolute; right: 5px; bottom: 2px; width: 5px; height: 5px; border: solid #cfd5e2; border-width: 0 1px 1px 0; }
.corner.dark { border-color: #7c879f; }

.main { display: flex; flex: 1; min-height: 0; }
.editor { display: flex; flex: 1; min-width: 0; flex-direction: column; }
.formula-bar { display: flex; flex: none; align-items: center; height: 44px; padding: 4px 1px 0 8px; }
.namebox { display: flex; align-items: center; width: 149px; height: 24px; padding-right: 3px; border: 1px solid #d8dae0; border-radius: 2px; background: #fff; }
.namebox input { flex: 1; min-width: 0; text-align: center; padding-right: 6px; font: 15px "Liberation Serif", serif; }
.fx { display: flex; align-items: center; gap: 11px; width: 96px; padding-left: 46px; color: #a0a1a5; }
.fx em { font: italic 18px/20px "Liberation Serif", serif; }
.formula { flex: 1; height: 24px; border: 1px solid #d8dae0; border-radius: 2px; background: #fff; }
.sheet { display: flex; flex: 1; min-height: 0; }
.viewport { flex: 1; min-width: 0; overflow: hidden; }
table { border-collapse: separate; border-spacing: 0; table-layout: fixed; width: 1548px; }
.rowcol { width: 53px; }
.datacol { width: 115px; }
th, td { padding: 0; height: 29px; line-height: 26px; font-weight: normal; }
thead th { height: 35px; line-height: 32px; font-size: 21px; color: #111; border-bottom: 1px solid #a9b0cb; border-right: 1px solid; border-image: linear-gradient(#f5f7f9, #a9b0cb) 1; }
tbody th { font-size: 21px; color: #111; border-right: 1px solid; border-bottom: 1px solid; border-image: linear-gradient(90deg, #f5f7f9, #a9b0cb) 1; }
thead th.sel { background: #d2d5de; color: #21bb7e; border-image: none; border-color: #d2d5de; border-bottom: 2px solid #21bb7e; }
tbody th.sel { background: #d2d5de; color: #21bb7e; border-image: none; border-color: #d2d5de; border-right: 2px solid #21bb7e; }
.cornercell i { width: 18px; height: 18px; margin: 0 0 0 27px; background: #b7b8ba; clip-path: polygon(100% 0, 100% 100%, 0 100%); }
td { position: relative; background: #cce8cf; border: solid #c3c8da; border-width: 0 1px 1px 0; text-align: right; padding: 2px 4px 0 0; font-family: "Liberation Serif", "Noto Sans CJK SC", serif; font-size: 23px; color: #111; }
td.text { text-align: left; padding-left: 3px; font-weight: 300; }
.selection { position: absolute; z-index: 1; inset: -2px; border: 3px solid #21bb7e; }
.selection::after { content: ""; position: absolute; right: -5px; bottom: -5px; width: 6px; height: 6px; border: solid #fff; border-width: 1px 0 0 1px; background: #21bb7e; }
.vscroll { display: flex; flex-direction: column; width: 17px; padding-left: 3px; border-left: 1px solid #dfe1e8; }
.split { width: 10px; height: 4px; margin: 5px 0 5px 2px; border: solid #9aa3b8; border-width: 1px 0; }
.vtrack { display: flex; flex: 1; flex-direction: column; align-items: center; background: #e8eaef; padding: 7px 0 8px; gap: 10px; }
.up, .down { width: 6px; height: 4px; background: #7c8cab; clip-path: polygon(50% 0, 100% 100%, 0 100%); }
.down { clip-path: polygon(0 0, 100% 0, 50% 100%); }
.vthumb { flex: 1; width: 12px; margin-bottom: 33px; border-radius: 6px; background: #d4d7df; }
.sheetbar { display: flex; flex: none; height: 22px; border-top: 1px solid #e3e5eb; }
.sheetnav { display: flex; align-items: center; gap: 10px; width: 120px; padding-left: 12px; color: #a2a4a9; }
.sheettab { width: 73px; margin-top: -1px; padding-left: 2px; background: #fff; color: #21bb7e; font-weight: bold; border-right: 1px solid #dfe1e8; border-bottom: 1px solid #dfe1e8; }
.addsheet { padding: 0 4px; color: #2b3552; }
.hscroll { display: flex; align-items: center; justify-content: space-between; width: 611px; margin-left: auto; margin-right: 23px; }
.grip { width: 3px; height: 10px; border: solid #97a2b8; border-width: 0 1px; }
.htrack { display: flex; align-items: center; width: 594px; height: 14px; padding: 0 6px 0 6px; background: #e8eaef; }
.left, .right { width: 4px; height: 6px; background: #7c8cab; clip-path: polygon(0 50%, 100% 0, 100% 100%); }
.right { clip-path: polygon(0 0, 100% 50%, 0 100%); }
.hthumb { flex: 1; height: 12px; margin: 0 64px 0 12px; border-radius: 6px; background: #d4d7df; }

.pane { display: flex; flex-direction: column; width: 346px; padding: 0 12px 25px 12px; border-left: 1px solid #dfe1e8; color: #9c9da2; }
.panehead { display: flex; align-items: center; gap: 4px; height: 18px; margin: 6px -5px 0 -3px; }
.push { flex: 1; }
.panehead button + button { margin-left: 5px; }
.pane h2 { margin: 15px 0 7px; font-size: 14px; line-height: 18px; font-weight: normal; }
.objects { flex: 1; border: 1px solid #dfe1e8; border-radius: 2px; background: #fff; }
.order { display: flex; align-items: center; gap: 10px; margin: 7px 0; }
.order button, .shows button { height: 23px; border: 1px solid #e6e8ed; color: #8b93a7; background: #fafbfc; }
.order button { display: grid; place-items: center; width: 23px; }
.i12 { width: 12px; height: 12px; fill: #8492ab; stroke: none; }
.shows { display: flex; gap: 10px; }
.shows button { height: 24px; padding: 0 7px; }
.strip { display: flex; flex-direction: column; align-items: center; width: 44px; padding: 11px 0 43px; border-left: 1px solid #dfe1e8; color: #a3a8b3; }
.handle { width: 20px; height: 4px; margin-bottom: 11px; border: solid #e0e2e8; border-width: 1px 0; }
.strip button { height: 36px; }
.rule { width: 38px; height: 1px; margin-top: auto; background: #dfe1e8; }

.status { display: flex; flex: none; align-items: center; height: 28px; border-top: 1px solid #dfe1e8; padding-bottom: 1px; }
.macro { margin: 0 15px 0 16px; color: #2b3552; }
.status .bar { height: 14px; }
.status > span { margin-left: 10px; }
.views { display: flex; align-items: center; margin-left: auto; width: 453px; color: #2b3040; }
.views button { display: flex; align-items: center; justify-content: center; gap: 4px; width: 24px; height: 24px; border-radius: 2px; margin-right: 2px; }
.views button.on { background: #d9dde5; }
.views .crossbtn { width: 25px; margin-right: 15px; }
.views .bar { margin-right: 10px; }
.views .break { margin-right: 10px; }
.views .zoom { width: 42px; margin-right: 12px; }
.zoomout { width: 10px; height: 2px; background: #2b3552; }
.zoomline { width: 120px; height: 1px; margin-left: 12px; background: #2b3552; }

.dialog { position: absolute; z-index: 2; left: 686px; top: 224px; width: 416px; border: 1px solid #5b6b5f; background: #f0f0f0; color: #000; }
.dtitle { display: flex; align-items: center; gap: 5px; height: 25px; padding: 0 7px 2px 3px; background: #fff; }
.dtitle button { margin-left: auto; }
.dbody { padding: 10px 11px 12px; }
.line { display: block; margin: 0; height: 18px; line-height: 18px; }
.rules { list-style: none; margin: 6px 0; padding: 1px; border: 1px solid #828790; background: #fff; }
.rules li { display: flex; align-items: center; gap: 9px; height: 21px; padding-left: 7px; }
.rules li.on { background: #e8ebf0; }
.rules li::before { content: ""; width: 5px; height: 9px; background: #555; clip-path: polygon(0 0, 100% 50%, 0 100%); }
.panel { display: flex; flex-direction: column; gap: 6px; margin-top: 8px; padding: 9px 10px 10px; border: 1px solid #828790; }
.frow { display: flex; align-items: center; }
.stylelabel { width: 75px; }
.pick { position: relative; display: block; }
.pick select { appearance: none; display: block; width: 100%; height: 23px; padding-left: 3px; border: 1px solid #adadad; background: #e1e1e1; }
.pick::after { right: 6px; top: 9px; width: 7px; height: 4px; background: #000; }
.style { width: 138px; }
.check { display: flex; align-items: center; gap: 5px; margin-left: 6px; }
.check input { appearance: none; width: 13px; height: 13px; border: 1px solid #333; background: #fff; }
.labels { line-height: 17px; }
.minmax { display: grid; grid-template-columns: 42px 158px 158px; column-gap: 6px; align-items: center; }
.value { position: relative; display: flex; align-items: center; height: 21px; background: #fff; padding-left: 6px; padding-right: 3px; }
.value input { flex: 1; min-width: 0; }
.value .maxinput { flex: none; width: 21px; }
.textcaret { width: 1px; height: 16px; background: #000; }
.value button { display: grid; place-items: center; width: 22px; height: 19px; margin-left: auto; border: 1px solid #adadad; background: #e1e1e1; }
.value button svg { width: 16px; height: 14px; stroke: none; }
.mark { position: absolute; width: 67px; height: 38px; border: 3px solid #fb0007; box-shadow: 2px 2px 5px #0009, inset 2px 2px 6px #0008; pointer-events: none; }
.low { left: -10px; top: -6px; }
.high { left: -7px; top: -14px; height: 51px; }
.looks { display: grid; grid-template-columns: 106px 70px 106px 70px; column-gap: 6px; align-items: center; }
.swatch { position: relative; height: 20px; padding: 3px; border: 1px solid #adadad; background: #e1e1e1; }
.swatch i { width: 47px; height: 12px; background: #638ec6; }
.swatch::after { content: ""; position: absolute; right: 5px; top: 7px; width: 7px; height: 4px; background: #000; clip-path: polygon(0 0, 100% 0, 50% 100%); }
.swatch:disabled { background: #ccc; border-color: #bfbfbf; }
.swatch:disabled::after { background: #9b9b9b; }
.axis { margin-top: 1px; }
.axisbtn { width: 107px; height: 30px; margin: 0 auto 0 1px; border: 1px solid #adadad; background: #e1e1e1; }
.dir { width: 76px; margin-left: 6px; }
.prev { justify-content: flex-end; gap: 6px; height: 20px; margin-top: 1px; }
.sample { width: 74px; height: 20px; padding: 2px; border: 1px solid #000; background: #fff; }
.sample div { height: 14px; padding: 1px; border: 1px solid #ddd; }
.sample i { width: 52px; height: 10px; background: #638ec6; }
.actions { display: flex; justify-content: flex-end; gap: 8px; margin: 7px 8px 0; }
.actions button { width: 77px; height: 30px; border: 1px solid #adadad; background: #e1e1e1; }
.actions .ok { border: 2px solid #0078d7; }

.ime { position: absolute; z-index: 3; right: 0; bottom: 0; display: flex; align-items: center; gap: 8px; width: 126px; height: 26px; border: 1px solid #b8cbe6; background: #fff; color: #0a6cdb; }
.sogou { width: 32px; height: 32px; margin: -8px -3px 0 -28px; stroke: none; }
.ime b { width: 16px; font-size: 16px; line-height: 20px; }
.ime .i16 { fill: currentColor; stroke: none; }
.ime .ln { fill: none; stroke: currentColor; stroke-width: 2; }
.watermark { position: absolute; z-index: 4; right: 8px; bottom: 8px; display: flex; pointer-events: none; }
.watermark svg { width: 44px; height: 42px; stroke: none; }
.watermark div { display: flex; flex-direction: column; margin-top: -2px; }
.watermark b { font-size: 21px; line-height: 26px; font-weight: 500; color: #65a0dc; }
.watermark span { font-size: 17px; line-height: 20px; color: #52b67acc; }
</style>
